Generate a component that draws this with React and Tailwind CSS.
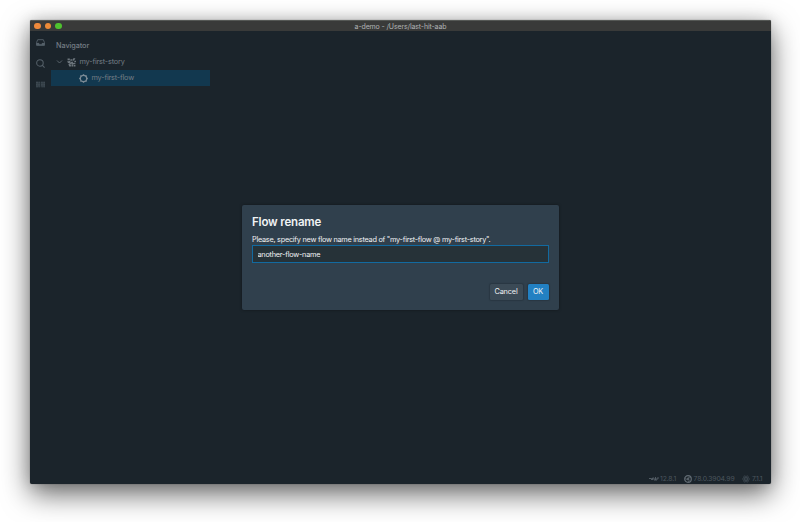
import React from 'react';

function InboxIcon() {
  return (
    <svg className="h-[9px] w-[9px]" viewBox="0 0 16 16" fill="none" stroke="#56616a" strokeWidth="1.6">
      <path d="M3 3h10l2 5v5H1V8z" />
      <path d="M1 9h4l1 2h4l1-2h4v4H1z" fill="#56616a" strokeWidth="0.5" />
    </svg>
  );
}

function SearchIcon() {
  return (
    <svg className="h-[9px] w-[9px]" viewBox="0 0 16 16" fill="none" stroke="#56616a" strokeWidth="1.8">
      <circle cx="7" cy="7" r="5.8" />
      <path d="m11 11 4.3 4.3" />
    </svg>
  );
}

function KeysIcon() {
  return (
    <svg className="h-[9px] w-[9px]" viewBox="0 0 16 16" fill="#3d4851">
      <path d="M0 3h7v10H0zM8 3h8v10H8z" opacity="0.55" />
      <path d="M0 3h4v3H0zM5 3h2v3H5zM9 3h3v3H9zM13 3h3v3h-3zM0 7h3v3H0zM4 7h3v3H4zM9 7h3v3H9zM13 7h3v3h-3zM0 11h4v2H0zM5 11h2v2H5zM10 11h2v2h-2zM13 11h3v2h-3z" />
    </svg>
  );
}

function StoryIcon() {
  return (
    <svg className="h-[9px] w-[9px]" viewBox="0 0 16 16" fill="#6d767d">
      <path d="M1 1h4v3H1zM6 2h3v3H6zM12 0l3 1-3 4-3-1zM0 6l6-1v5l-4-1zM7 7l3-1 1 3 4-1v2l-4 1-3-1-4 3-2-1 4-3zM3 13l4-1v3H4zM8 11h3v4H8zM12 12h3v3h-3zM13 5h3v2h-3z" />
    </svg>
  );
}

function FlowIcon() {
  return (
    <svg className="h-[9px] w-[9px]" viewBox="0 0 16 16" fill="none" stroke="#7d8b96">
      <circle cx="8" cy="8" r="5.6" strokeWidth="2.2" />
      <path d="M8 .3v2M8 13.7v2M.3 8h2M13.7 8h2M2.6 2.6l1.4 1.4M12 12l1.4 1.4M2.6 13.4 4 12M12 4l1.4-1.4" strokeWidth="2.4" />
    </svg>
  );
}

function NodeIcon() {
  return (
    <svg className="h-[6px] w-[10px]" viewBox="0 0 20 12" fill="none" stroke="#59636b" strokeWidth="1.8">
      <path d="M0 5h5v3M7 8V4h3v4h3V2M13 8h3V4h4" />
    </svg>
  );
}

function ChromeIcon() {
  return (
    <svg className="h-[8px] w-[8px]" viewBox="0 0 16 16" fill="none" stroke="#616b73" strokeWidth="2.4">
      <circle cx="8" cy="8" r="6.6" />
      <circle cx="8" cy="8" r="2.2" fill="#616b73" strokeWidth="1" />
      <path d="M8 4.6h6M5 9.8 2.3 5M11 9.8 8.2 14.6" strokeWidth="1.3" />
    </svg>
  );
}

function ElectronIcon() {
  return (
    <svg className="h-[8px] w-[8px]" viewBox="0 0 16 16" fill="none" stroke="#424d55" strokeWidth="1.2">
      <ellipse cx="8" cy="8" rx="7.3" ry="2.9" />
      <ellipse cx="8" cy="8" rx="7.3" ry="2.9" transform="rotate(60 8 8)" />
      <ellipse cx="8" cy="8" rx="7.3" ry="2.9" transform="rotate(120 8 8)" />
      <circle cx="8" cy="8" r="1" />
    </svg>
  );
}

function TitleBar() {
  return (
    <header className="grid h-[11px] grid-cols-[100px_1fr_100px] items-center rounded-t-[2px] border-t border-[#555855] bg-[#393a39]">
      <div className="flex gap-[4.2px] pl-[4px]">
        <i className="size-[6.5px] rounded-full bg-[#f08a3c]" />
        <i className="size-[6.5px] rounded-full bg-[#ed8b38]" />
        <i className="size-[6.5px] rounded-full bg-[#4fc22f]" />
      </div>
      <h1 className="pt-px text-center text-[7px] leading-[9px] tracking-[-0.13px] text-[#b0b2b4]">a-demo - /Users/last-hit-aab</h1>
    </header>
  );
}

function Navigator() {
  return (
    <nav className="w-[159px] text-[7.3px] tracking-[-0.18px] text-[#747d84]">
      <h2 className="pt-[9px] pl-[5px] leading-[11px] font-medium tracking-[-0.08px]">Navigator</h2>
      <div className="mt-[3px] flex h-[16px] items-center pl-[5px]">
        <svg className="mr-[4px] h-[6px] w-[7px]" viewBox="0 0 14 12" fill="none" stroke="#606a72" strokeWidth="1.8">
          <path d="m2 3 5 5 5-5" />
        </svg>
        <StoryIcon />
        <span className="ml-[3.5px] pt-px">my-first-story</span>
      </div>
      <div className="flex h-[16px] items-center bg-[#12384f] pl-[28px]">
        <FlowIcon />
        <span className="ml-[3.5px] pt-px">my-first-flow</span>
      </div>
    </nav>
  );
}

function RenameDialog() {
  return (
    <section role="dialog" className="absolute top-[185px] left-[212px] flex h-[105px] w-[317px] flex-col rounded-[2px] bg-[#30404d] px-[10px] text-[7.3px] tracking-[-0.25px] text-[#f0f3f5] shadow-[0_0_3px_rgba(0,0,0,0.4)]">
      <h2 className="pt-[10px] text-[11.5px] leading-[15px] font-semibold tracking-[-0.17px]">Flow rename</h2>
      <p className="mt-[5px] leading-[10px] whitespace-nowrap">Please, specify new flow name instead of &quot;my-first-flow @ my-first-story&quot;.</p>
      <input
        className="h-[18px] w-full border border-[#126aa0] bg-[#263238] px-[4.5px] pt-px text-[7.3px] tracking-[-0.23px] text-[#f0f3f5] outline-none"
        defaultValue="another-flow-name"
      />
      <div className="mt-[21px] flex justify-end gap-[5px] pr-[0.5px] tracking-[-0.15px]">
        <button className="h-[16px] w-[33px] rounded-[1.5px] bg-[#3b4a56] pt-px shadow-[0_0_1px_1px_rgba(16,22,26,0.2)]">Cancel</button>
        <button className="h-[16px] w-[21px] rounded-[1.5px] bg-[#2280c2] pt-px shadow-[0_0_1px_1px_rgba(16,22,26,0.2)]">OK</button>
      </div>
    </section>
  );
}

export default function App() {
  return (
    <div className="h-[522px] w-[800px] overflow-hidden bg-white px-[30px] pt-[20px] font-['Inter','Liberation_Sans',sans-serif]">
      <main className="relative flex h-[464px] w-[741px] flex-col rounded-[2px] bg-[#1b242b] shadow-[0_10px_28px_rgba(0,0,0,0.6),0_0_14px_rgba(0,0,0,0.12),0_0_1px_rgba(0,0,0,0.6)]">
        <TitleBar />
        <div className="flex flex-1">
          <aside className="flex w-[21px] flex-col items-center gap-[12px] pt-[7px]">
            <InboxIcon />
            <SearchIcon />
            <KeysIcon />
          </aside>
          <Navigator />
        </div>
        <footer className="flex h-[11px] items-center justify-end gap-[8px] pr-[8.5px] text-[6.8px] tracking-[-0.15px] text-[#4c565e]">
          <span className="flex items-center gap-[1.5px]"><NodeIcon /><span className="pt-px">12.8.1</span></span>
          <span className="flex items-center gap-[1.5px]"><ChromeIcon /><span className="pt-px">78.0.3904.99</span></span>
          <span className="flex items-center gap-[1.5px]"><ElectronIcon /><span className="pt-px">7.1.1</span></span>
        </footer>
        <RenameDialog />
      </main>
    </div>
  );
}
